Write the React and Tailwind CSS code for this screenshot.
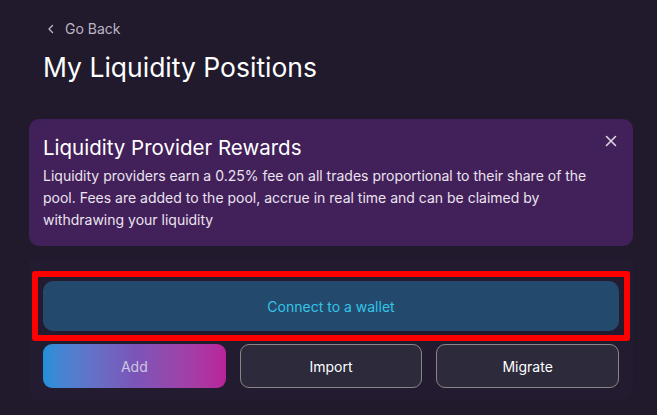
import React from 'react';

const App = () => {
  return (
    <div className="min-h-screen w-full bg-[#201a2c] font-['Inter','Liberation_Sans',sans-serif]">
      <div className="ml-[29px] w-[604px] pt-[18px]">
        <div className="px-[14px]">
          <button className="flex items-center gap-[8px] text-[14px] leading-[22px] text-[#bdb5c4]">
            <svg width="12" height="12" viewBox="0 0 12 12" fill="none" className="ml-[2px]">
              <path d="M7.5 2.5L4 6l3.5 3.5" stroke="#bdb5c4" strokeWidth="1.4" strokeLinecap="round" strokeLinejoin="round" />
            </svg>
            Go Back
          </button>
          <h1 className="mt-[10px] text-[26.5px] leading-[34px] text-white">My Liquidity Positions</h1>
        </div>

        <div className="mt-[35px] rounded-[10px] bg-[#42205a] px-[14px] pt-[15px] pb-[15px]">
          <div className="flex items-start justify-between">
            <h2 className="text-[20.5px] leading-[28px] text-white">Liquidity Provider Rewards</h2>
            <button className="mt-[1px] mr-[2px]">
              <svg width="12" height="12" viewBox="0 0 12 12" fill="none">
                <path d="M1.5 1.5l9 9M10.5 1.5l-9 9" stroke="#ddd6e3" strokeWidth="1.6" strokeLinecap="round" />
              </svg>
            </button>
          </div>
          <p className="mt-[3px] pr-[20px] text-[14px] leading-[22px] text-[#ebe4ef]">
            Liquidity providers earn a 0.25% fee on all trades proportional to their share of the pool. Fees are added to the pool, accrue in real time and can be claimed by withdrawing your liquidity
          </p>
        </div>

        <div className="mt-[14px] rounded-b-[12px] bg-[#231c30] px-[3px] pt-[11px] pb-[13px]">
          <div className="rounded-[3px] border-[6px] border-[#ff0000] px-[5px] py-[4px]">
            <button className="flex h-[50px] w-full items-center justify-center rounded-[10px] bg-[#234a6d] text-[14px] text-[#35c4e6]">
              Connect to a wallet
            </button>
          </div>
          <div className="mt-[3px] grid grid-cols-3 gap-[14px] px-[11px]">
            <button className="flex h-[44px] items-center justify-center rounded-[9px] bg-gradient-to-r from-[#1f90d9] via-[#7a55b8] to-[#ba219b] text-[14px] text-[#cdc8e0]">
              Add
            </button>
            <button className="flex h-[44px] items-center justify-center rounded-[9px] border border-[#8c8385] bg-[#2c2a3b] text-[14px] text-white">
              Import
            </button>
            <button className="flex h-[44px] items-center justify-center rounded-[9px] border border-[#8c8385] bg-[#2c2a3b] text-[14px] text-white">
              Migrate
            </button>
          </div>
        </div>
      </div>
    </div>
  );
};

export default App;
